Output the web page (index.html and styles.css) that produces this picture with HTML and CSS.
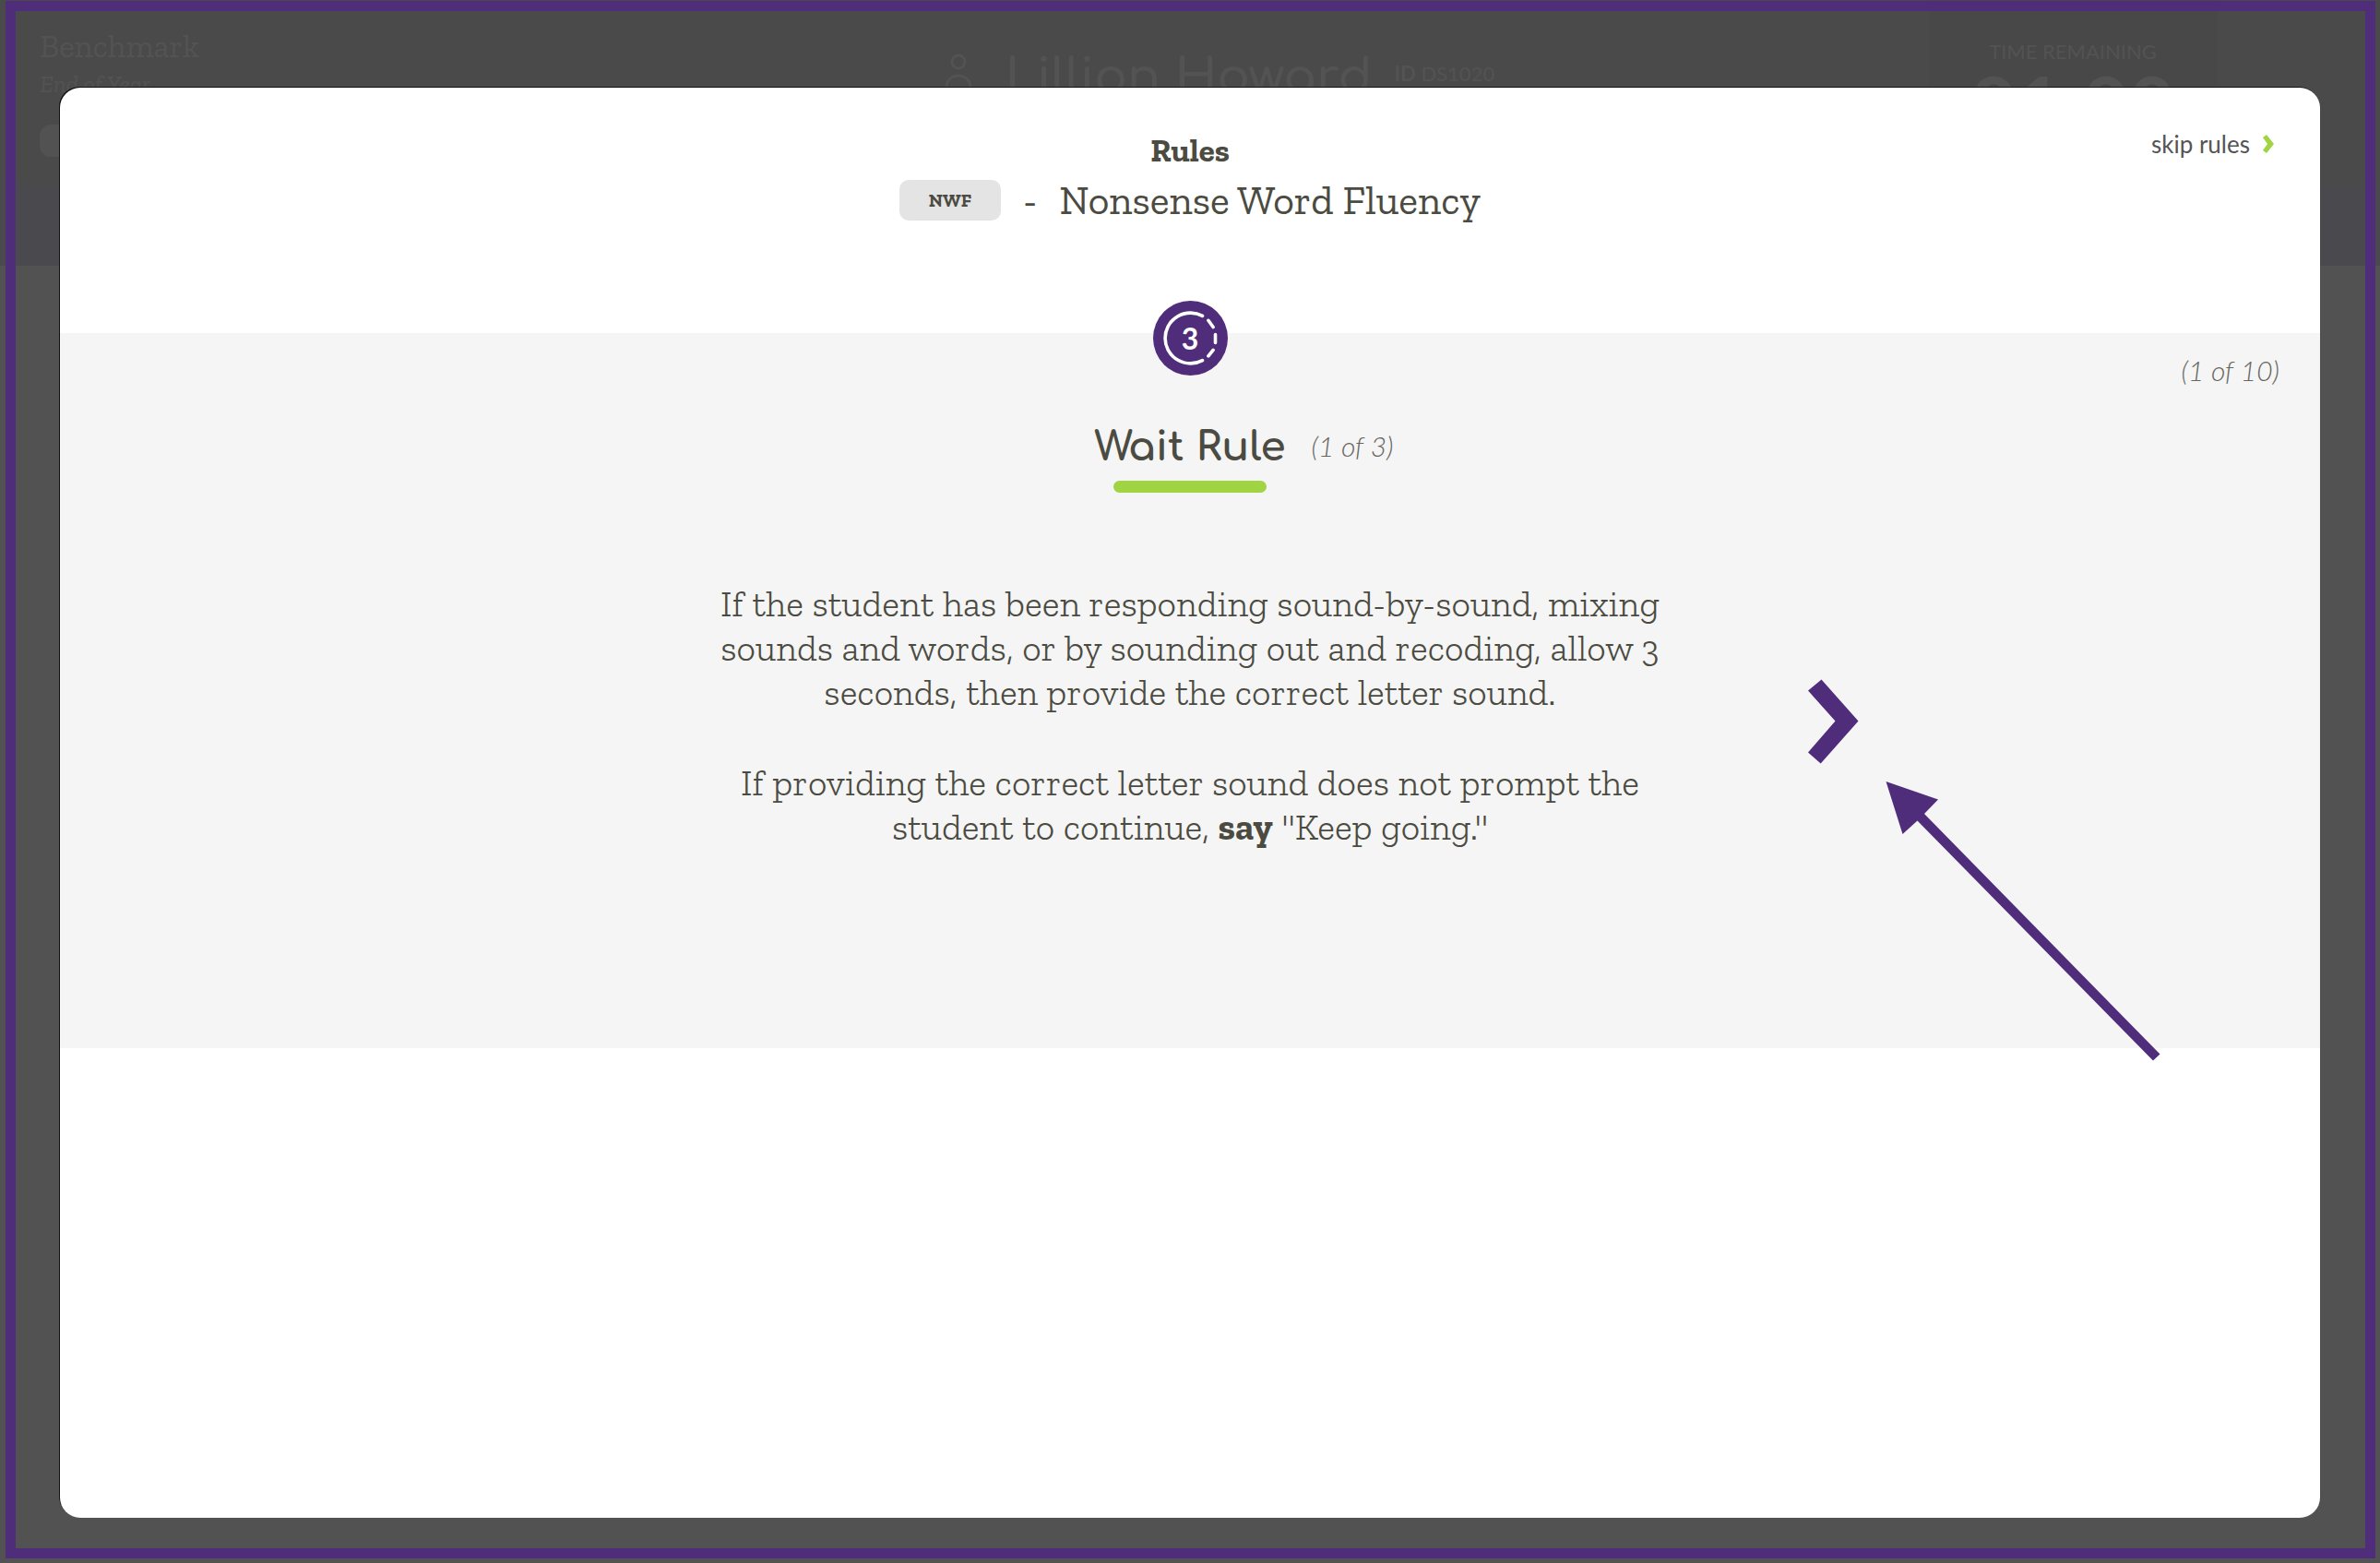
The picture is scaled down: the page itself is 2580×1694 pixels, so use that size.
FILE: index.html
```html
<!DOCTYPE html>
<html lang="en">
<head>
<meta charset="utf-8">
<title>Rules - Nonsense Word Fluency</title>
<link rel="stylesheet" href="styles.css">
</head>
<body>
<div class="page">
  <header class="topbar">
    <div class="period">
      <div class="period-name">Benchmark</div>
      <div class="period-term">End of Year</div>
      <div class="period-pill"></div>
    </div>
    <div class="student">
      <svg class="student-icon" width="30" height="56" viewBox="0 0 30 56" fill="none" stroke="currentColor" stroke-width="3"><ellipse cx="15" cy="11" rx="7" ry="7"/><path d="M2 54V38a13 12 0 0 1 26 0v16"/></svg>
      <span class="student-name">Lillion Howard</span>
      <span class="student-id"><b>ID</b> DS1020</span>
    </div>
    <div class="timer">
      <div class="timer-label">TIME REMAINING</div>
      <div class="timer-value">01:00</div>
    </div>
  </header>
  <div class="subbar"></div>
</div>

<div class="overlay">
  <main class="modal" role="dialog" aria-labelledby="title">
    <header class="modal-head">
      <div class="modal-title">
        <div class="eyebrow">Rules</div>
        <div class="title-row">
          <span class="badge">NWF</span>
          <span>-</span>
          <h1 id="title">Nonsense Word Fluency</h1>
        </div>
      </div>
      <button class="skip" type="button">skip rules
        <svg width="12" height="20" viewBox="0 0 12 20" fill="currentColor"><path d="M0 3 4 0l8 10-8 10-4-3 5-7z"/></svg>
      </button>
    </header>

    <section class="stage">
      <div class="stage-top">
        <div class="wait-icon">
          <svg class="wait-ring" width="81" height="81" viewBox="-40.5 -40.5 81 81" fill="none" stroke="currentColor" stroke-width="3.6" stroke-linecap="round"><path d="M13 -24.1A27.4 27.4 0 1 0 13 24.1M19.4 -19.2 24.6 -12M27 -4V5M24.6 12.8 19.4 19.4"/></svg>
          <span class="wait-number">3</span>
        </div>
        <span class="counter overall">(1 of 10)</span>
      </div>

      <div class="rule-head">
        <h2 class="rule-title">Wait Rule</h2>
        <span class="counter">(1 of 3)</span>
      </div>
      <div class="underline"></div>

      <div class="rule-body">
        <div class="rule-text">
          <p>If the student has been responding sound-by-sound, mixing<br>sounds and words, or by sounding out and recoding, allow 3<br>seconds, then provide the correct letter sound.</p>
          <p>If providing the correct letter sound does not prompt the<br>student to continue, <b>say</b> "Keep going."</p>
        </div>
        <button class="next" type="button" aria-label="Next rule">
          <svg width="55" height="92" viewBox="0 0 55 92" fill="currentColor"><path d="M0 12.5 14.5 .5 54.5 45.5 13.7 91.5 0 79.5 29.5 45.5z"/></svg>
        </button>
      </div>

      <svg class="pointer" width="298" height="303" viewBox="0 0 298 303" fill="currentColor" aria-hidden="true"><path d="M.5 0 57 19.5 42 35 297.5 295.5 290 302.5 34.5 42.5 18.5 57z"/></svg>
    </section>
  </main>
</div>
<div class="frame"></div>
</body>
</html>
```

FILE: styles.css
```css
:root {
  --purple: #502d7b;
  --green: #a0d442;
  --ink: #4b4b42;
  --serif: "Zilla Slab", "Liberation Serif", serif;
  --serif-light: "Zilla Slab Light", "Zilla Slab", "Liberation Serif", serif;
  --sans: Lato, sans-serif;
  --sans-light: "Lato Light", Lato, sans-serif;
  --round: Comfortaa, Lato, sans-serif;
}

* { box-sizing: border-box; }

body {
  margin: 0;
  min-height: 100vh;
  position: relative;
  overflow-x: hidden;
  background: #525252;
  color: var(--ink);
  font-family: var(--sans);
}

h1, h2, p { margin: 0; font-weight: 400; }

button {
  border: 0;
  padding: 0;
  background: none;
  font: inherit;
  color: inherit;
  cursor: pointer;
}

svg { display: block; }

/* Dimmed assessment page behind the dialog */
.topbar {
  height: 201px;
  display: grid;
  grid-template-columns: 1fr auto 1fr;
  background: #4a4a4a;
  color: #535353;
}

.period { padding: 28px 43px; font-family: var(--serif); }
.period-name { font-size: 35px; line-height: 44px; }
.period-term { font-size: 26px; line-height: 38px; font-style: italic; }
.period-pill { width: 110px; height: 35px; margin-top: 25px; border-radius: 12px; background: #525252; }

.student { display: flex; padding: 56px 0 0 64px; }
.student-icon { margin-right: 36px; }
.student-name { font-family: var(--round); font-size: 53px; line-height: 56px; font-weight: 600; }
.student-id { margin-left: 24px; font-size: 22px; line-height: 48px; }

.timer {
  justify-self: end;
  width: 312px;
  margin-right: 177px;
  padding-top: 40px;
  background: #484848;
  text-align: center;
}
.timer-label { font-size: 22px; line-height: 32px; }
.timer-value { font-size: 86px; line-height: 80px; font-weight: 700; }

.subbar { height: 87px; background: #4a494e; }

/* Dialog */
.overlay {
  position: absolute;
  inset: 0;
  display: grid;
  padding: 95px 65px 49px;
}

.modal {
  border-radius: 22px;
  background: #fff;
  box-shadow: -1px -1px 0 #111;
}

.modal-head {
  display: grid;
  grid-template-columns: 1fr auto 1fr;
  min-height: 266px;
  padding: 44px 50px 0;
}

.modal-title {
  grid-column: 2;
  text-align: center;
  font-family: var(--serif);
}
.eyebrow { font-size: 35px; line-height: 48px; font-weight: 700; }
.title-row {
  display: flex;
  align-items: center;
  justify-content: center;
  gap: 24px;
  font-size: 44px;
  line-height: 60px;
}
.title-row h1 { font-size: 44px; }
.badge {
  width: 110px;
  height: 44px;
  border-radius: 10px;
  background: #e4e4e4;
  font-size: 20px;
  line-height: 44px;
  font-weight: 700;
}

.skip {
  justify-self: end;
  align-self: start;
  display: flex;
  align-items: center;
  gap: 14px;
  color: #555;
  font-size: 26px;
  line-height: 34px;
}
.skip svg { color: var(--green); }

.stage {
  position: relative;
  min-height: 775px;
  padding-bottom: 160px;
  background: #f5f5f5;
}

.stage-top {
  display: grid;
  grid-template-columns: 1fr auto 1fr;
  padding: 0 44px;
}

.wait-icon {
  grid-column: 2;
  display: grid;
  place-items: center;
  width: 81px;
  height: 81px;
  margin-top: -35px;
  border-radius: 50%;
  background: var(--purple);
  color: #fff;
}
.wait-icon > * { grid-area: 1 / 1; }
.wait-number { font-size: 32px; line-height: 40px; font-weight: 700; }

.counter {
  color: #66665f;
  font-family: var(--sans-light);
  font-size: 30px;
  line-height: 40px;
  font-style: italic;
  font-weight: 300;
}
.overall { justify-self: end; margin-top: 20px; }

.rule-head {
  display: grid;
  grid-template-columns: 1fr auto 1fr;
  column-gap: 28px;
  align-items: start;
  margin-top: 34px;
}
.rule-head .counter { margin-top: 8px; }
.rule-title {
  grid-column: 2;
  font-family: var(--round);
  font-size: 44px;
  line-height: 60px;
  font-weight: 700;
}

.underline {
  width: 166px;
  height: 13px;
  margin: 6px auto 0;
  border-radius: 7px;
  background: var(--green);
}

.rule-body {
  display: grid;
  grid-template-columns: 1fr 1024px 1fr;
  align-items: center;
  margin-top: 96px;
}
.rule-text {
  grid-column: 2;
  font-family: var(--serif-light);
  font-size: 40px;
  line-height: 48px;
  font-weight: 300;
  text-align: center;
  white-space: nowrap;
}
.rule-text p + p { margin-top: 50px; }
.rule-text b { font-family: var(--serif); font-weight: 700; }

.next { justify-self: start; margin-left: 158px; padding-top: 14px; color: var(--purple); }

/* Callout arrow pointing at the next button */
.pointer {
  position: absolute;
  top: 486px;
  right: 173px;
  color: var(--purple);
}

.frame {
  position: absolute;
  inset: 1px 5px 5px 6px;
  border: 11px solid var(--purple);
  pointer-events: none;
}
```
